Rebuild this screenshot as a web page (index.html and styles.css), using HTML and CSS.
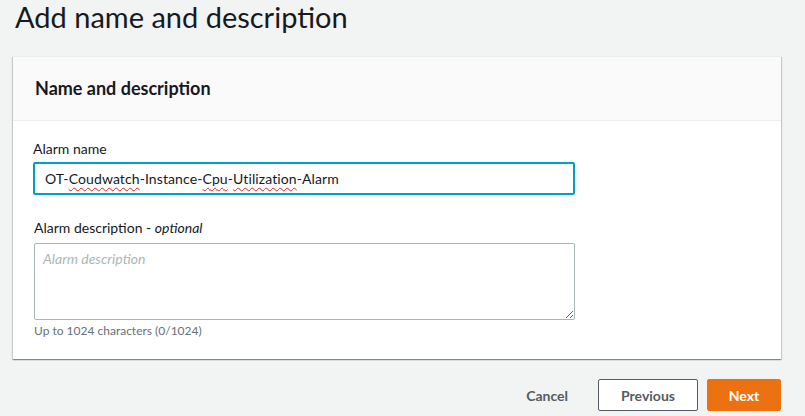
FILE: index.html
```html
<!DOCTYPE html>
<html>
<head>
<meta charset="utf-8">
<link rel="stylesheet" href="styles.css">
</head>
<body>
<div class="page">
  <h1 class="title">Add name and description</h1>
  <section class="card">
    <header class="card-header">
      <h2 class="card-title">Name and description</h2>
    </header>
    <div class="card-body">
      <div class="field">
        <label class="label">Alarm name</label>
        <div class="input" role="textbox">OT-<span class="spell">Coudwatch</span>-Instance-<span class="spell">Cpu</span>-<span class="spell">Utilization</span>-Alarm</div>
      </div>
      <div class="field field-desc">
        <label class="label">Alarm description - <i>optional</i></label>
        <textarea class="textarea" placeholder="Alarm description"></textarea>
        <div class="hint">Up to 1024 characters (0/1024)</div>
      </div>
    </div>
  </section>
  <div class="actions">
    <button class="btn btn-link">Cancel</button>
    <button class="btn btn-normal">Previous</button>
    <button class="btn btn-primary">Next</button>
  </div>
</div>
</body>
</html>
```
FILE: styles.css
```css
html, body {
  margin: 0;
  padding: 0;
  background: #f2f3f3;
  font-family: Lato, "Liberation Sans", sans-serif;
  color: #16191f;
}
.page {
  padding: 0 24px 0 13px;
}
.title {
  margin: 0;
  padding: 0 0 0 2px;
  font-size: 29px;
  font-weight: 400;
  line-height: 34px;
  height: 56px;
  box-sizing: border-box;
  color: #16191f;
}
.card {
  background: #fff;
  border-top: 1px solid #eaeded;
  box-shadow: 0 1px 1px 0 rgba(0,28,36,.3), 1px 1px 1px 0 rgba(0,28,36,.15), -1px 1px 1px 0 rgba(0,28,36,.15);
  margin-top: 0;
}
.card-header {
  background: #fafafa;
  border-bottom: 1px solid #eaeded;
  display: flex;
  align-items: center;
  padding: 0 22px 2px 22px;
  box-sizing: border-box;
  height: 64px;
}
.card-title {
  margin: 0;
  font-size: 18px;
  font-weight: 700;
  color: #16191f;
}
.card-body {
  padding: 17px 206px 20px 20px;
}
.field {
  display: flex;
  flex-direction: column;
}
.label {
  font-size: 14px;
  line-height: 22px;
  color: #16191f;
  margin-bottom: 2px;
}
.field-desc {
  margin-top: 22px;
}
.field-desc .label {
  margin-bottom: 4px;
  margin-left: 1px;
}
.input {
  height: 33px;
  box-sizing: border-box;
  border: 2px solid #00a1c9;
  border-radius: 2px;
  padding: 0 10px;
  font-size: 14px;
  line-height: 29px;
  color: #16191f;
  background: #fff;
  letter-spacing: 0.1px;
}
.spell {
  text-decoration: underline wavy #e02020;
  text-decoration-thickness: 1px;
  text-underline-offset: 3px;
}
.textarea {
  margin-left: 1px;
  height: 77px;
  box-sizing: border-box;
  border: 1px solid #aab7b8;
  border-radius: 2px;
  padding: 6px 8px;
  font-family: inherit;
  font-size: 14px;
  resize: vertical;
  background: #fff;
}
.textarea::placeholder {
  color: #aab7b8;
  font-style: italic;
}
.hint {
  margin-top: 3px;
  margin-left: 1px;
  font-size: 12px;
  line-height: 16px;
  color: #687078;
}
.actions {
  display: flex;
  justify-content: flex-end;
  align-items: center;
  gap: 9px;
  margin-top: 20px;
}
.btn {
  font-family: inherit;
  font-size: 14px;
  font-weight: 700;
  height: 32px;
  box-sizing: border-box;
  border-radius: 2px;
  padding: 0 20px;
  cursor: pointer;
}
.btn-link {
  background: transparent;
  border: 1px solid transparent;
  color: #545b64;
}
.btn-normal {
  background: #fff;
  border: 1px solid #545b64;
  color: #545b64;
  width: 100px;
}
.btn-primary {
  background: #ec7211;
  border: 1px solid #ec7211;
  color: #fff;
  width: 74px;
}
```
